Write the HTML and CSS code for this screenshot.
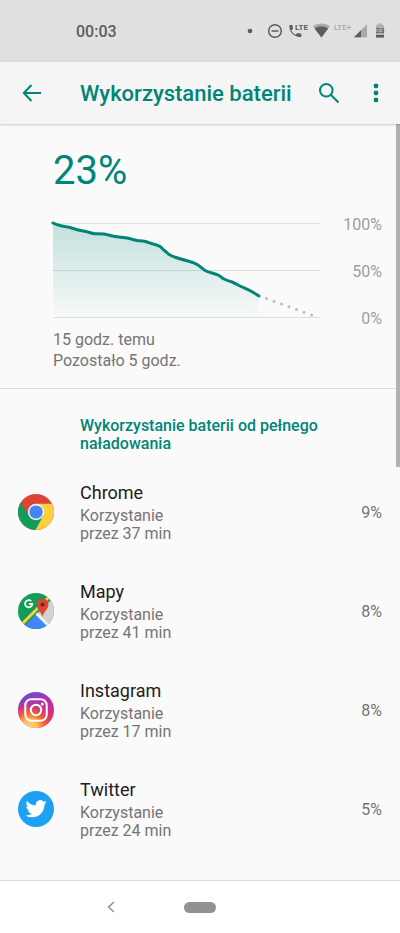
FILE: index.html
```
<!doctype html>
<html lang="pl">
<head>
	<meta charset="UTF-8">
	<meta name="viewport" content="width=device-width, initial-scale=1">
	<title>Wykorzystanie baterii</title>
	<link rel="stylesheet" href="styles.css">
</head>
<body>
	<div class="screen">
		<div class="status">
			<span class="clock">00:03</span>
			<svg class="status-icons" width="138" height="18" viewBox="0 0 138 18">
				<circle cx="3" cy="9" r="2.3" fill="#5c5c5c"/>
				<g fill="none" stroke="#5c5c5c" stroke-width="1.5">
					<circle cx="28" cy="9" r="6.3"/>
					<path d="M24.5 9h7"/>
				</g>
				<path d="M42.400 3h3l.6 3.800-1.700 1.700c1 2 2.300 3.300 4.300 4.300l1.800-1.800 3.900.7v3.300c-6.900.6-12.500-5-11.900-12z" fill="#5c5c5c"/>
				<text x="48" y="8" class="lte">LTE</text>
				<path d="M66 4.300c5-3.800 11.800-3.800 16.800 0L74.400 15.500z" fill="#a9a9a9"/>
				<path d="M67.600 6.500c4.400-2.600 9.200-2.600 13.600 0l-6.800 9z" fill="#5c5c5c"/>
				<text x="87" y="8" class="lte faint">LTE+</text>
				<path d="M107 15.300 120 2.300v13z" fill="#a9a9a9"/>
				<path d="M107 15.300 114 8.300v7z" fill="#5c5c5c"/>
				<path d="M129 3h2V1.500h4V3h2v12.500h-8z" fill="#b0b0b0"/>
				<path d="M129 13h8v2.500h-8z" fill="#5c5c5c"/>
				<text x="133" y="11" class="level">23</text>
			</svg>
		</div>
		<header class="bar">
			<button class="icon-btn back" aria-label="Wstecz">
				<svg width="20" height="18" viewBox="0 0 20 18"><path d="M19 9H2M9.500 1 1.800 9l7.700 8"/></svg>
			</button>
			<h1>Wykorzystanie baterii</h1>
			<button class="icon-btn" aria-label="Szukaj">
				<svg width="22" height="22" viewBox="0 0 22 22"><circle cx="8.300" cy="8.300" r="6.300"/><path d="m13 13 7.500 7.500"/></svg>
			</button>
			<button class="icon-btn more" aria-label="Więcej opcji">
				<svg width="6" height="20" viewBox="0 0 6 20"><circle cx="3" cy="3" r="2.400"/><circle cx="3" cy="10" r="2.400"/><circle cx="3" cy="17" r="2.400"/></svg>
			</button>
		</header>
		<main>
			<div class="scrollbar"></div>
			<section class="summary">
				<div class="percent">23%</div>
				<div class="chart">
					<svg class="plot" viewBox="0 0 267 96" preserveAspectRatio="none">
						<defs>
							<linearGradient id="fade" x1="0" y1="0" x2="0" y2="1">
								<stop offset="0" stop-color="#008577" stop-opacity=".22"/>
								<stop offset="1" stop-color="#008577" stop-opacity=".01"/>
							</linearGradient>
						</defs>
						<path class="grid" d="M0 1.500h267M0 48.500h267M0 95.500h267"/>
						<path fill="url(#fade)" d="M0 1 9 4 17 5.500 25 8 33 9.500 40 11.500 51 12 62 14.500 74 16 84 18.500 94 20 100 22 107 24.500 112 29 117 33 123 35.500 135 39 145 43 153 49 165 53 171 57 179 60 187 64 195 68 206 74V95H0z"/>
						<path class="line" d="M0 1C3 2.500 6 3.500 9 4S15 5 17 5.500 23 7.500 25 8 31 9 33 9.500 38 11 40 11.500 47 11.500 51 12 58 14 62 14.500 70 15.500 74 16 80 18 84 18.500 91 19 94 20 98 21.500 100 22 105 23 107 24.500 110 27.500 112 29 115 32 117 33 120 34.500 123 35.500 131 38 135 39 142 41 145 43 150 47.500 153 49 161 51 165 53 168 55.500 171 57 176 59 179 60 184 62.500 187 64 197 68 206 74"/>
						<path class="forecast" d="M213.500 76.500 264 95"/>
					</svg>
					<div class="scale"><span>100%</span><span>50%</span><span>0%</span></div>
				</div>
				<p>15 godz. temu<br>Pozostało 5 godz.</p>
			</section>
			<section class="usage">
				<h2>Wykorzystanie baterii od pełnego naładowania</h2>
				<ul>
					<li>
						<svg class="app-icon" viewBox="0 0 36 36">
							<circle cx="18" cy="18" r="18" fill="#db4437"/>
							<path d="M2.800 8.400A18 18 0 0 0 17.600 36l7.700-13.800-14.500-.2z" fill="#0f9d58"/>
							<path d="M18 9.800h16A18 18 0 0 1 17.600 36l7.500-13.900z" fill="#ffcd40"/>
							<circle cx="18" cy="18" r="8.200" fill="#f1f1f1"/>
							<circle cx="18" cy="18" r="6.600" fill="#4285f4"/>
						</svg>
						<div class="app"><h3>Chrome</h3><p>Korzystanie<br>przez 37 min</p></div>
						<span class="share">9%</span>
					</li>
					<li>
						<svg class="app-icon" viewBox="0 0 36 36">
							<defs><clipPath id="round"><circle cx="18" cy="18" r="18"/></clipPath></defs>
							<g clip-path="url(#round)">
								<path d="M0 0h36v36H0z" fill="#0f9d58"/>
								<path d="M36 4 20 20l16 16z" fill="#d2d2d2"/>
								<path d="M32 3 2 33" stroke="#ffcd40" stroke-width="3"/>
								<path d="M4 36 18.500 20.500 34 36z" fill="#4285f4"/>
								<path d="m18.500 20.500 14 14" stroke="#f5f5f5" stroke-width="3"/>
								<path d="M24.500 24c-.6-5-6-7.500-6-12.500a6 6 0 0 1 12 0c0 5-5.400 7.500-6 12.500z" fill="#db4437"/>
								<circle cx="24.500" cy="11.500" r="2" fill="#7b231b"/>
								<path d="M13.300 8.200a3.600 3.600 0 1 0 1 2.700h-3.400" fill="none" stroke="#fff" stroke-width="1.800"/>
							</g>
						</svg>
						<div class="app"><h3>Mapy</h3><p>Korzystanie<br>przez 41 min</p></div>
						<span class="share">8%</span>
					</li>
					<li>
						<svg class="app-icon" viewBox="0 0 36 36">
							<defs>
								<linearGradient id="insta" x1=".2" y1="0" x2=".6" y2="1">
									<stop offset="0" stop-color="#5b56d0"/>
									<stop offset=".35" stop-color="#b02fae"/>
									<stop offset="1" stop-color="#e62e62"/>
								</linearGradient>
								<radialGradient id="glow" cx=".32" cy="1" r=".75">
									<stop offset="0" stop-color="#ffd676"/>
									<stop offset=".3" stop-color="#fdba5c"/>
									<stop offset=".55" stop-color="#f5662f"/>
									<stop offset="1" stop-color="#e02f6b" stop-opacity="0"/>
								</radialGradient>
							</defs>
							<circle cx="18" cy="18" r="18" fill="url(#insta)"/>
							<circle cx="18" cy="18" r="18" fill="url(#glow)"/>
							<g fill="none" stroke="#fff" stroke-width="2">
								<rect x="7.300" y="7.300" width="21.400" height="21.400" rx="6"/>
								<circle cx="18" cy="18" r="5.200"/>
							</g>
							<circle cx="24.300" cy="11.900" r="1.500" fill="#fff"/>
						</svg>
						<div class="app"><h3>Instagram</h3><p>Korzystanie<br>przez 17 min</p></div>
						<span class="share">8%</span>
					</li>
					<li>
						<svg class="app-icon" viewBox="0 0 36 36">
							<circle cx="18" cy="18" r="18" fill="#1da1f2"/>
							<path transform="translate(7.500 7.200) scale(.88)" fill="#fff" d="M23.950 4.570a10 10 0 0 1-2.820.780 4.960 4.960 0 0 0 2.160-2.720c-.950.550-2 .960-3.130 1.180a4.920 4.920 0 0 0-8.380 4.480C7.690 8.100 4.070 6.130 1.640 3.160a4.820 4.820 0 0 0-.670 2.480c0 1.710.870 3.210 2.190 4.100a4.900 4.900 0 0 1-2.230-.620v.060a4.920 4.920 0 0 0 3.950 4.830 5 5 0 0 1-2.210.080 4.940 4.940 0 0 0 4.600 3.420A9.870 9.870 0 0 1 0 19.540a14 14 0 0 0 7.550 2.210c9.050 0 14-7.500 14-13.980 0-.210 0-.420-.020-.630a9.940 9.940 0 0 0 2.420-2.570z"/>
						</svg>
						<div class="app"><h3>Twitter</h3><p>Korzystanie<br>przez 24 min</p></div>
						<span class="share">5%</span>
					</li>
				</ul>
			</section>
		</main>
		<nav>
			<button class="nav-back" aria-label="Wstecz">
				<svg width="8" height="12" viewBox="0 0 8 12"><path d="M7 1 1.500 6 7 11"/></svg>
			</button>
			<button class="nav-home" aria-label="Ekran główny"></button>
		</nav>
	</div>
</body>
</html>
```
FILE: styles.css
```
*{
	box-sizing: border-box;
}
body{
	margin: 0;
	font-family: Roboto, "Noto Sans", sans-serif;
	font-size: 16px;
	color: #757575;
	background: #fafafa;
}
h1, h2, h3, p, ul{
	margin: 0;
	padding: 0;
}
button{
	padding: 0;
	border: none;
	background: none;
}
svg{
	display: block;
}
.screen{
	display: flex;
	flex-direction: column;
	min-height: 100vh;
}

/* status bar */
.status{
	display: flex;
	align-items: center;
	justify-content: space-between;
	height: 62px;
	padding: 0 15px 0 76px;
	background: #e0e0e0;
}
.clock{
	font-size: 16px;
	font-weight: 500;
	color: #5c5c5c;
}
.lte{
	font-size: 8px;
	font-weight: 700;
	fill: #5c5c5c;
}
.faint{
	font-weight: 500;
	fill: #a9a9a9;
}
.level{
	font-size: 8px;
	font-weight: 500;
	fill: #5c5c5c;
	text-anchor: middle;
}

/* app bar */
.bar{
	display: flex;
	align-items: center;
	height: 62px;
	padding: 0 9px 0 12px;
	background: #f5f5f5;
	box-shadow: 0 1px 2px rgba(0,0,0,.2);
	z-index: 1;
}
.bar h1{
	flex: 1;
	padding-top: 2px;
	font-size: 22px;
	line-height: 28px;
	font-weight: 500;
	color: #008577;
}
.icon-btn{
	display: flex;
	align-items: center;
	justify-content: center;
	width: 40px;
	height: 40px;
}
.icon-btn path, .icon-btn circle{
	fill: none;
	stroke: #008577;
	stroke-width: 2;
}
.icon-btn.more circle{
	fill: #008577;
	stroke: none;
}
.back{
	margin-right: 28px;
}
.more{
	width: 30px;
	margin-left: 12px;
}

main{
	flex: 1;
	position: relative;
}
.scrollbar{
	position: absolute;
	top: 0;
	right: 0;
	width: 4px;
	height: 343px;
	background: #b2b2b2;
}

/* battery chart */
.summary{
	padding: 23px 18px 17px 53px;
	border-bottom: 1px solid #dcdcdc;
}
.percent{
	font-size: 40px;
	line-height: 48px;
	color: #008577;
}
.chart{
	display: flex;
	margin-top: 27px;
}
.plot{
	flex: 1;
	min-width: 0;
	height: 96px;
	overflow: visible;
}
.plot path{
	vector-effect: non-scaling-stroke;
}
.grid{
	stroke: #dedede;
}
.line{
	fill: none;
	stroke: #008577;
	stroke-width: 3;
	stroke-linecap: round;
}
.forecast{
	stroke: #bdbdbd;
	stroke-width: 3;
	stroke-linecap: round;
	stroke-dasharray: 0 8;
}
.scale{
	display: flex;
	flex-direction: column;
	justify-content: space-between;
	width: 62px;
	margin: -6px 0 -10px;
	line-height: 18px;
	text-align: right;
	color: #9e9e9e;
}
.summary p{
	margin-top: 11px;
	line-height: 21px;
}

/* app list */
.usage{
	padding: 28px 18px 36px;
}
.usage h2{
	padding-left: 62px;
	font-size: 16px;
	line-height: 18px;
	font-weight: 500;
	color: #008577;
}
.usage ul{
	display: flex;
	flex-direction: column;
	gap: 37px;
	margin-top: 28px;
	list-style: none;
}
.usage li{
	display: flex;
	align-items: center;
}
.app-icon{
	width: 36px;
	height: 36px;
	margin-right: 26px;
}
.app{
	flex: 1;
}
.app h3{
	margin-bottom: 2px;
	font-size: 18px;
	line-height: 24px;
	font-weight: 400;
	color: #212121;
}
.app p{
	line-height: 18px;
}

/* navigation */
nav{
	display: grid;
	grid-template-columns: 1fr 32px 1fr;
	align-items: center;
	height: 53px;
	border-top: 1px solid #dcdcdc;
	background: #fff;
}
.nav-back{
	display: flex;
	justify-content: center;
	justify-self: end;
	width: 40px;
	margin-right: 53px;
}
.nav-back path{
	fill: none;
	stroke: #909090;
	stroke-width: 1.5;
}
.nav-home{
	height: 11px;
	border-radius: 6px;
	background: #929292;
}
```
